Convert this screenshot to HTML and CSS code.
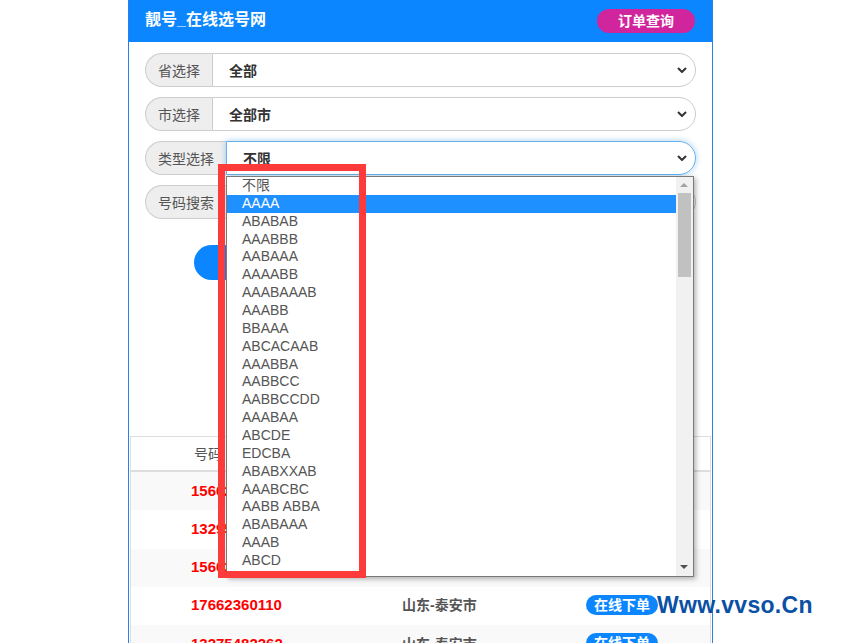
FILE: index.html
```html
<!DOCTYPE html>
<html lang="zh-CN">
<head>
    <meta charset="UTF-8">
    <meta name="viewport" content="width=device-width, initial-scale=1.0">
    <title>靓号_在线选号网</title>
    <link rel="stylesheet" href="styles.css">
</head>
<body>
    <div class="page">
        <div class="header">
            <h1>靓号_在线选号网</h1>
            <a href="#" class="order-btn">订单查询</a>
        </div>

        <div class="search-form">
            <div class="input-group">
                <span class="addon">省选择</span>
                <div class="select">全部<svg class="caret" width="10" height="6" viewBox="0 0 10 6"><path d="M1 1l4 4 4-4" fill="none" stroke="#333" stroke-width="2"/></svg></div>
            </div>
            <div class="input-group">
                <span class="addon">市选择</span>
                <div class="select">全部市<svg class="caret" width="10" height="6" viewBox="0 0 10 6"><path d="M1 1l4 4 4-4" fill="none" stroke="#333" stroke-width="2"/></svg></div>
            </div>
            <div class="input-group">
                <span class="addon">类型选择</span>
                <div class="select focus">不限<svg class="caret" width="10" height="6" viewBox="0 0 10 6"><path d="M1 1l4 4 4-4" fill="none" stroke="#333" stroke-width="2"/></svg></div>
            </div>
            <div class="input-group">
                <span class="addon">号码搜索</span>
                <div class="select text-input">请输入号码</div>
            </div>
            <button class="search-btn">立即搜索</button>
        </div>

        <div class="num-table">
            <div class="row head">
                <div class="cell">号码</div>
                <div class="cell">归属地</div>
                <div class="cell">操作</div>
            </div>
            <div class="row">
                <div class="cell num">15662380110</div>
                <div class="cell area">山东-泰安市</div>
                <div class="cell"><a href="#" class="buy-btn">在线下单</a></div>
            </div>
            <div class="row">
                <div class="cell num">13295482360</div>
                <div class="cell area">山东-泰安市</div>
                <div class="cell"><a href="#" class="buy-btn">在线下单</a></div>
            </div>
            <div class="row">
                <div class="cell num">15662386623</div>
                <div class="cell area">山东-泰安市</div>
                <div class="cell"><a href="#" class="buy-btn">在线下单</a></div>
            </div>
            <div class="row">
                <div class="cell num">17662360110</div>
                <div class="cell area">山东-泰安市</div>
                <div class="cell"><a href="#" class="buy-btn">在线下单</a></div>
            </div>
            <div class="row">
                <div class="cell num">13275482262</div>
                <div class="cell area">山东-泰安市</div>
                <div class="cell"><a href="#" class="buy-btn">在线下单</a></div>
            </div>
        </div>
    </div>

    <!-- 类型下拉列表（展开状态） -->
    <div class="dropdown">
        <ul class="options">
            <li>不限</li>
            <li class="active">AAAA</li>
            <li>ABABAB</li>
            <li>AAABBB</li>
            <li>AABAAA</li>
            <li>AAAABB</li>
            <li>AAABAAAB</li>
            <li>AAABB</li>
            <li>BBAAA</li>
            <li>ABCACAAB</li>
            <li>AAABBA</li>
            <li>AABBCC</li>
            <li>AABBCCDD</li>
            <li>AAABAA</li>
            <li>ABCDE</li>
            <li>EDCBA</li>
            <li>ABABXXAB</li>
            <li>AAABCBC</li>
            <li>AABB ABBA</li>
            <li>ABABAAA</li>
            <li>AAAB</li>
            <li>ABCD</li>
        </ul>
        <div class="scrollbar">
            <span class="arrow up"></span>
            <span class="thumb"></span>
            <span class="arrow down"></span>
        </div>
    </div>

    <div class="mark-box"></div>
    <div class="watermark">Www.vvso.Cn</div>
</body>
</html>
```

FILE: styles.css
```css
* {
    margin: 0;
    padding: 0;
    box-sizing: border-box;
}

body {
    position: relative;
    font-family: "Liberation Sans", "Noto Sans CJK SC", sans-serif;
    font-size: 14px;
    color: #555;
    background-color: #fff;
    height: 643px;
    overflow: hidden;
}

.page {
    width: 585px;
    margin: 0 auto;
    min-height: 643px;
    border-left: 1px solid #2a80e4;
    border-right: 1px solid #2a80e4;
}

.header {
    height: 42px;
    background-color: #0b86fe;
    display: flex;
    align-items: center;
    justify-content: space-between;
    padding: 0 17px 0 16px;
}

.header h1 {
    font-size: 16px;
    color: #fff;
    font-weight: bold;
    line-height: 20px;
    margin-top: -2px;
}

.order-btn {
    display: block;
    width: 98px;
    height: 24px;
    line-height: 24px;
    margin-top: -1px;
    text-align: center;
    border-radius: 12px;
    background-color: #d1259e;
    color: #fff;
    font-weight: bold;
    text-decoration: none;
}

.search-form {
    padding: 11px 16px 0 16px;
    display: flex;
    flex-direction: column;
    gap: 10px;
}

.input-group {
    display: flex;
    height: 34px;
}

.addon {
    display: flex;
    align-items: center;
    padding: 0 12px;
    background-color: #eee;
    border: 1px solid #ccc;
    border-right: none;
    border-radius: 17px 0 0 17px;
    color: #555;
}

.select {
    flex: 1;
    display: flex;
    align-items: center;
    justify-content: space-between;
    padding: 0 8px 0 16px;
    border: 1px solid #ccc;
    border-radius: 0 17px 17px 0;
    font-weight: bold;
    color: #333;
}

.select.focus {
    border-color: #66afe9;
    box-shadow: 0 0 6px rgba(102, 175, 233, 0.6);
}

.text-input {
    font-weight: normal;
    color: #999;
}

.search-btn {
    width: 453px;
    height: 35px;
    margin: 16px auto 0 auto;
    border: none;
    border-radius: 18px;
    background-color: #0b86fe;
    color: #fff;
    font-size: 16px;
    font-weight: bold;
    font-family: inherit;
}

.num-table {
    margin: 156px 1px 0 1px;
    border: 1px solid #ddd;
    border-bottom: none;
}

.row {
    display: grid;
    grid-template-columns: 211px 212px 1fr;
    height: 38.25px;
    align-items: center;
}

.row:nth-child(even) {
    background-color: #f9f9f9;
}

.row.head {
    height: 35px;
    padding-bottom: 2px;
    border-bottom: 2px solid #ddd;
}

.cell {
    padding-left: 60px;
    white-space: nowrap;
}

.cell:nth-child(3) {
    padding-left: 32px;
}

.head .cell {
    padding-left: 63px;
    color: #555;
}

.num {
    color: #f00;
    font-weight: bold;
    font-size: 15px;
    margin-top: -2px;
}

.area {
    font-weight: bold;
    color: #555;
    margin-top: -3px;
}

.buy-btn {
    display: inline-block;
    padding: 0 8px;
    height: 20px;
    line-height: 20px;
    margin-top: -2px;
    border-radius: 10px;
    background-color: #0b86fe;
    color: #fff;
    font-weight: bold;
    text-decoration: none;
}

/* 下拉列表 */
.dropdown {
    position: absolute;
    left: 226px;
    top: 176px;
    width: 468px;
    height: 401px;
    background-color: #fff;
    border: 1px solid #7a7a7a;
    box-shadow: 2px 2px 5px rgba(0, 0, 0, 0.3);
    display: flex;
}

.options {
    flex: 1;
    list-style: none;
}

.options li {
    height: 17.86px;
    line-height: 17.86px;
    padding-left: 15px;
    color: #555;
}

.options li.active {
    background-color: #1e90ff;
    color: #fff;
}

.scrollbar {
    position: relative;
    width: 17px;
    background-color: #f1f1f1;
}

.thumb {
    position: absolute;
    left: 2px;
    top: 16px;
    width: 13px;
    height: 84px;
    background-color: #c1c1c1;
}

.arrow {
    position: absolute;
    left: 4px;
    width: 0;
    height: 0;
    border-left: 4px solid transparent;
    border-right: 4px solid transparent;
}

.arrow.up {
    top: 6px;
    border-bottom: 4px solid #a3a3a3;
}

.arrow.down {
    bottom: 7px;
    border-top: 4px solid #505050;
}

/* 标注框 */
.mark-box {
    position: absolute;
    left: 218px;
    top: 164px;
    width: 148px;
    height: 414px;
    border: 7px solid #fd3b3b;
}

.watermark {
    position: absolute;
    left: 657px;
    top: 594px;
    font-size: 23px;
    line-height: 23px;
    font-weight: bold;
    letter-spacing: 0.3px;
    color: #0a50a4;
}
```
